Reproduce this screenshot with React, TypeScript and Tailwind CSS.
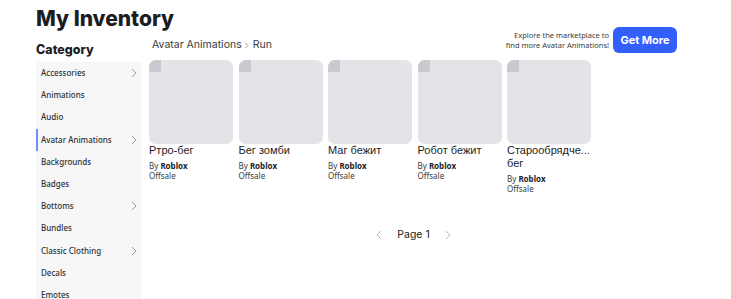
import React from "react";

const categories: { name: string; chevron?: boolean; active?: boolean }[] = [
  { name: "Accessories", chevron: true },
  { name: "Animations" },
  { name: "Audio" },
  { name: "Avatar Animations", chevron: true, active: true },
  { name: "Backgrounds" },
  { name: "Badges" },
  { name: "Bottoms", chevron: true },
  { name: "Bundles" },
  { name: "Classic Clothing", chevron: true },
  { name: "Decals" },
  { name: "Emotes" },
];

const items = ["Ртро-бег", "Бег зомби", "Маг бежит", "Робот бежит", "Старообрядческий бег"];

function Chevron({ dir = "right", className = "" }: { dir?: "right" | "left"; className?: string }) {
  return (
    <svg width="6" height="10" viewBox="0 0 6 10" className={className} fill="none">
      {dir === "right" ? (
        <path d="M1 1l4 4-4 4" stroke="currentColor" strokeWidth="1" />
      ) : (
        <path d="M5 1L1 5l4 4" stroke="currentColor" strokeWidth="1" />
      )}
    </svg>
  );
}

export default function App() {
  return (
    <div className="w-[731px] h-[299px] overflow-hidden bg-white pl-[36px] pr-[54px]" style={{ fontFamily: '"Noto Sans", Inter, sans-serif' }}>
      <h1 className="pt-[4px] text-[21px] font-extrabold leading-[30px] text-[#1b1d1f]" style={{ fontFamily: 'Inter, "Noto Sans", sans-serif' }}>
        My Inventory
      </h1>
      <div className="flex">
        <div className="w-[106px] shrink-0">
          <h2 className="mt-[6px] text-[12.5px] font-extrabold leading-[20px] text-[#1b1d1f]" style={{ fontFamily: 'Inter, "Noto Sans", sans-serif' }}>
            Category
          </h2>
          <ul className="mt-[2px] bg-[#f7f7f8]">
            {categories.map((c) => (
              <li key={c.name} className="relative flex h-[22.2px] items-center justify-between pl-[5px] pr-[5px]">
                {c.active && <span className="absolute left-0 top-0 h-full w-[2px] bg-[#6b8df5]" />}
                <span className="text-[8px] font-medium text-[#2f3133]">{c.name}</span>
                {c.chevron && <Chevron className="text-[#9a9ca0]" />}
              </li>
            ))}
          </ul>
        </div>
        <div className="flex-1">
          <div className="flex h-[26px] items-start justify-between">
            <div className="mt-[3px] flex items-center gap-[2px] pl-[10px] text-[10.5px] text-[#393b3d]" style={{ fontFamily: 'Inter, "Noto Sans", sans-serif' }}>
              <span>Avatar Animations</span>
              <Chevron className="mt-[2px] h-[7px] w-[5px] text-[#6a6c70]" />
              <span className="ml-[2px]">Run</span>
            </div>
            <div className="mt-[-7px] flex items-center gap-[4px]">
              <div className="text-right text-[7.5px] leading-[10px] text-[#393b3d]">
                <div>Explore the marketplace to</div>
                <div>find more Avatar Animations!</div>
              </div>
              <button className="h-[26px] w-[64px] rounded-[6px] bg-[#335fff] text-[11px] font-bold text-white" style={{ fontFamily: 'Inter, "Noto Sans", sans-serif' }}>
                Get More
              </button>
            </div>
          </div>
          <div className="flex gap-[5.5px] pl-[7px]">
            {items.map((n) => (
              <div key={n} className="w-[84px]">
                <div className="relative h-[84px] w-[84px] overflow-hidden rounded-[7px] bg-[#e3e4e8]">
                  <span className="absolute left-0 top-0 h-[12px] w-[12px] bg-[#c9cad0]" />
                </div>
                <div className="mt-[0px] text-[11px] leading-[13px] text-[#1b1d1f]" style={{ fontFamily: '"Liberation Sans", Arial, sans-serif' }}>
                  {n === "Старообрядческий бег" ? (
                    <>
                      <div>Старообрядче...</div>
                      <div>бег</div>
                    </>
                  ) : (
                    n
                  )}
                </div>
                <div className="mt-[4px] text-[8px] leading-[10px] text-[#393b3d]">
                  By <span className="font-bold text-[#1b1d1f]">Roblox</span>
                </div>
                <div className="text-[8px] leading-[9px] text-[#393b3d]">Offsale</div>
              </div>
            ))}
          </div>
          <div className="mt-[34px] flex items-center justify-center gap-[15px] pl-[8px]">
            <Chevron dir="left" className="text-[#b8babd]" />
            <span className="text-[10.5px] text-[#1b1d1f]" style={{ fontFamily: 'Inter, "Noto Sans", sans-serif' }}>Page 1</span>
            <Chevron className="text-[#b8babd]" />
          </div>
        </div>
      </div>
    </div>
  );
}
